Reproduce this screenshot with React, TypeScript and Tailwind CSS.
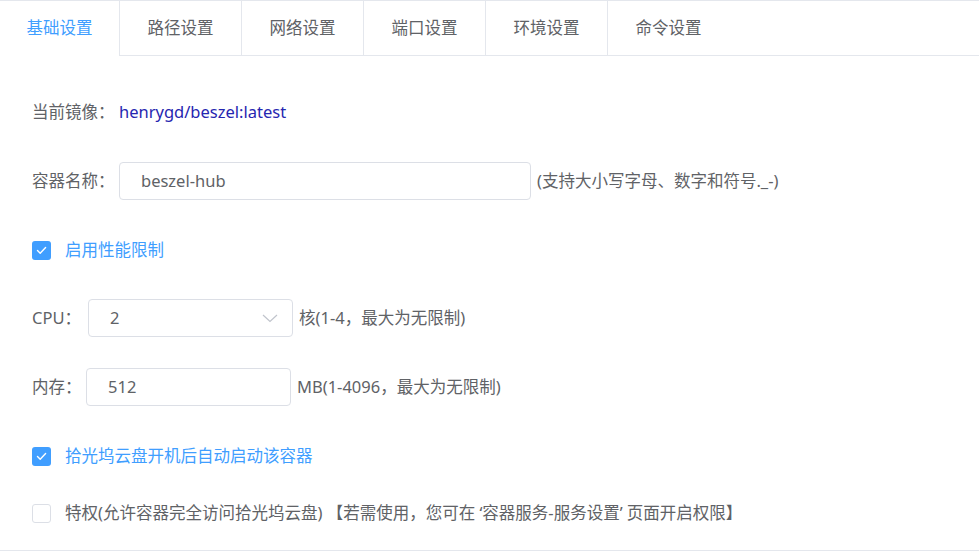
import React from "react";

const font = { fontFamily: '"Noto Sans", "Noto Sans CJK SC", sans-serif' };

function Check({ checked }: { checked: boolean }) {
  return checked ? (
    <span className="flex h-[19px] w-[19px] shrink-0 items-center justify-center rounded-[3px] bg-[#409eff]">
      <svg width="11" height="9" viewBox="0 0 11 9" fill="none">
        <path d="M1.5 4.6 L4.2 7.2 L9.6 1.6" stroke="#fff" strokeWidth="1.4" strokeLinecap="round" strokeLinejoin="round" />
      </svg>
    </span>
  ) : (
    <span className="h-[19px] w-[19px] shrink-0 rounded-[3px] border border-[#dcdfe6] bg-white" />
  );
}

const tabs = ["基础设置", "路径设置", "网络设置", "端口设置", "环境设置", "命令设置"];

export default function App() {
  return (
    <div className="h-[554px] w-[979px] overflow-hidden bg-white text-[16.5px] text-[#606266]" style={font}>
      <div className="flex h-[56px] border-t border-[#e4e7ed]">
        {tabs.map((t, i) =>
          i === 0 ? (
            <div key={t} className="flex w-[119px] items-center justify-center text-[#409eff]">
              {t}
            </div>
          ) : (
            <div
              key={t}
              className="flex w-[122px] items-center justify-center border-b border-l border-[#e4e7ed] text-[#606266]"
            >
              {t}
            </div>
          )
        )}
        <div className="flex-1 border-b border-[#e4e7ed]" />
      </div>

      <div className="flex h-[495px] flex-col border-b border-[#e4e7ed] pl-[32px] pt-[37px]">
        <div className="flex h-[38px] items-center">
          <span className="w-[87px] shrink-0 whitespace-nowrap">当前镜像：</span>
          <span className="text-[#2626b0]">henrygd/beszel:latest</span>
        </div>

        <div className="mt-[31px] flex h-[38px] items-center">
          <span className="w-[87px] shrink-0 whitespace-nowrap">容器名称：</span>
          <div className="flex h-[38px] w-[412px] items-center rounded-[4px] border border-[#dcdfe6] pl-[21px]">
            beszel-hub
          </div>
          <span className="ml-[6px] whitespace-nowrap">(支持大小写字母、数字和符号._-)</span>
        </div>

        <div className="mt-[31px] flex h-[38px] items-center">
          <Check checked />
          <span className="ml-[14px] text-[#409eff]">启用性能限制</span>
        </div>

        <div className="mt-[30px] flex h-[38px] items-center">
          <span className="w-[56px] shrink-0 whitespace-nowrap">CPU：</span>
          <div className="flex h-[38px] w-[205px] items-center justify-between rounded-[4px] border border-[#dcdfe6] pl-[21px] pr-[14px]">
            <span>2</span>
            <svg width="16" height="9" viewBox="0 0 16 9" fill="none">
              <path d="M1 1 L8 7.5 L15 1" stroke="#c0c4cc" strokeWidth="1.2" />
            </svg>
          </div>
          <span className="ml-[6px] whitespace-nowrap">核(1-4，最大为无限制)</span>
        </div>

        <div className="mt-[31px] flex h-[38px] items-center">
          <span className="w-[54px] shrink-0 whitespace-nowrap">内存：</span>
          <div className="flex h-[38px] w-[205px] items-center rounded-[4px] border border-[#dcdfe6] pl-[21px]">512</div>
          <span className="ml-[6px] whitespace-nowrap">MB(1-4096，最大为无限制)</span>
        </div>

        <div className="mt-[31px] flex h-[38px] items-center">
          <Check checked />
          <span className="ml-[14px] text-[#409eff]">拾光坞云盘开机后自动启动该容器</span>
        </div>

        <div className="mt-[19px] flex h-[38px] items-center">
          <Check checked={false} />
          <span className="ml-[14px] whitespace-nowrap">特权(允许容器完全访问拾光坞云盘) 【若需使用，您可在 ‘容器服务-服务设置’ 页面开启权限】</span>
        </div>
      </div>
    </div>
  );
}
